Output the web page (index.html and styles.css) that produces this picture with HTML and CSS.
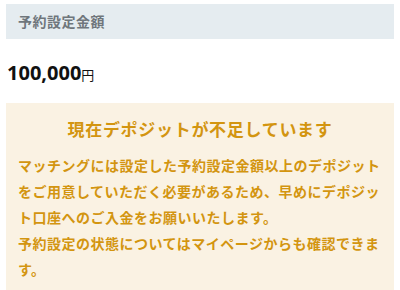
FILE: index.html
```html
<!DOCTYPE html>
<html lang="ja">
<head>
<meta charset="utf-8">
<link rel="stylesheet" href="styles.css">
</head>
<body>
<div class="page">
  <div class="label">予約設定金額</div>
  <div class="amount"><span class="num">100,000</span><span class="yen">円</span></div>
  <div class="notice">
    <div class="notice-title">現在デポジットが不足しています</div>
    <p class="notice-text">マッチングには設定した予約設定金額以上のデポジットをご用意していただく必要があるため、早めにデポジット口座へのご入金をお願いいたします。<br>予約設定の状態についてはマイページからも確認できます。</p>
  </div>
</div>
</body>
</html>
```
FILE: styles.css
```css
html, body { margin: 0; padding: 0; background: #fff; }
body { font-family: "Noto Sans", "Noto Sans CJK JP", sans-serif; }
.page { padding: 4px 6px; }
.label {
  background: #e5ecf0;
  color: #6f767c;
  font-weight: 700;
  font-size: 14px;
  letter-spacing: 0.5px;
  line-height: 35px;
  padding: 0 12px;
}
.amount { padding: 20px 1px 0; height: 44px; box-sizing: border-box; display: flex; align-items: baseline; }
.num { font-size: 20px; font-weight: 700; color: #111; }
.yen { font-size: 13px; color: #111; }
.notice {
  margin-top: 20px;
  background: #faf2e3;
  padding: 12px 12px 11px;
  color: #d39510;
  font-weight: 700;
}
.notice-title { text-align: center; font-size: 17px; letter-spacing: 0.7px; line-height: 30px; margin-bottom: 8px; }
.notice-text { margin: 0; font-size: 14px; letter-spacing: 0.5px; line-height: 26px; }
```
